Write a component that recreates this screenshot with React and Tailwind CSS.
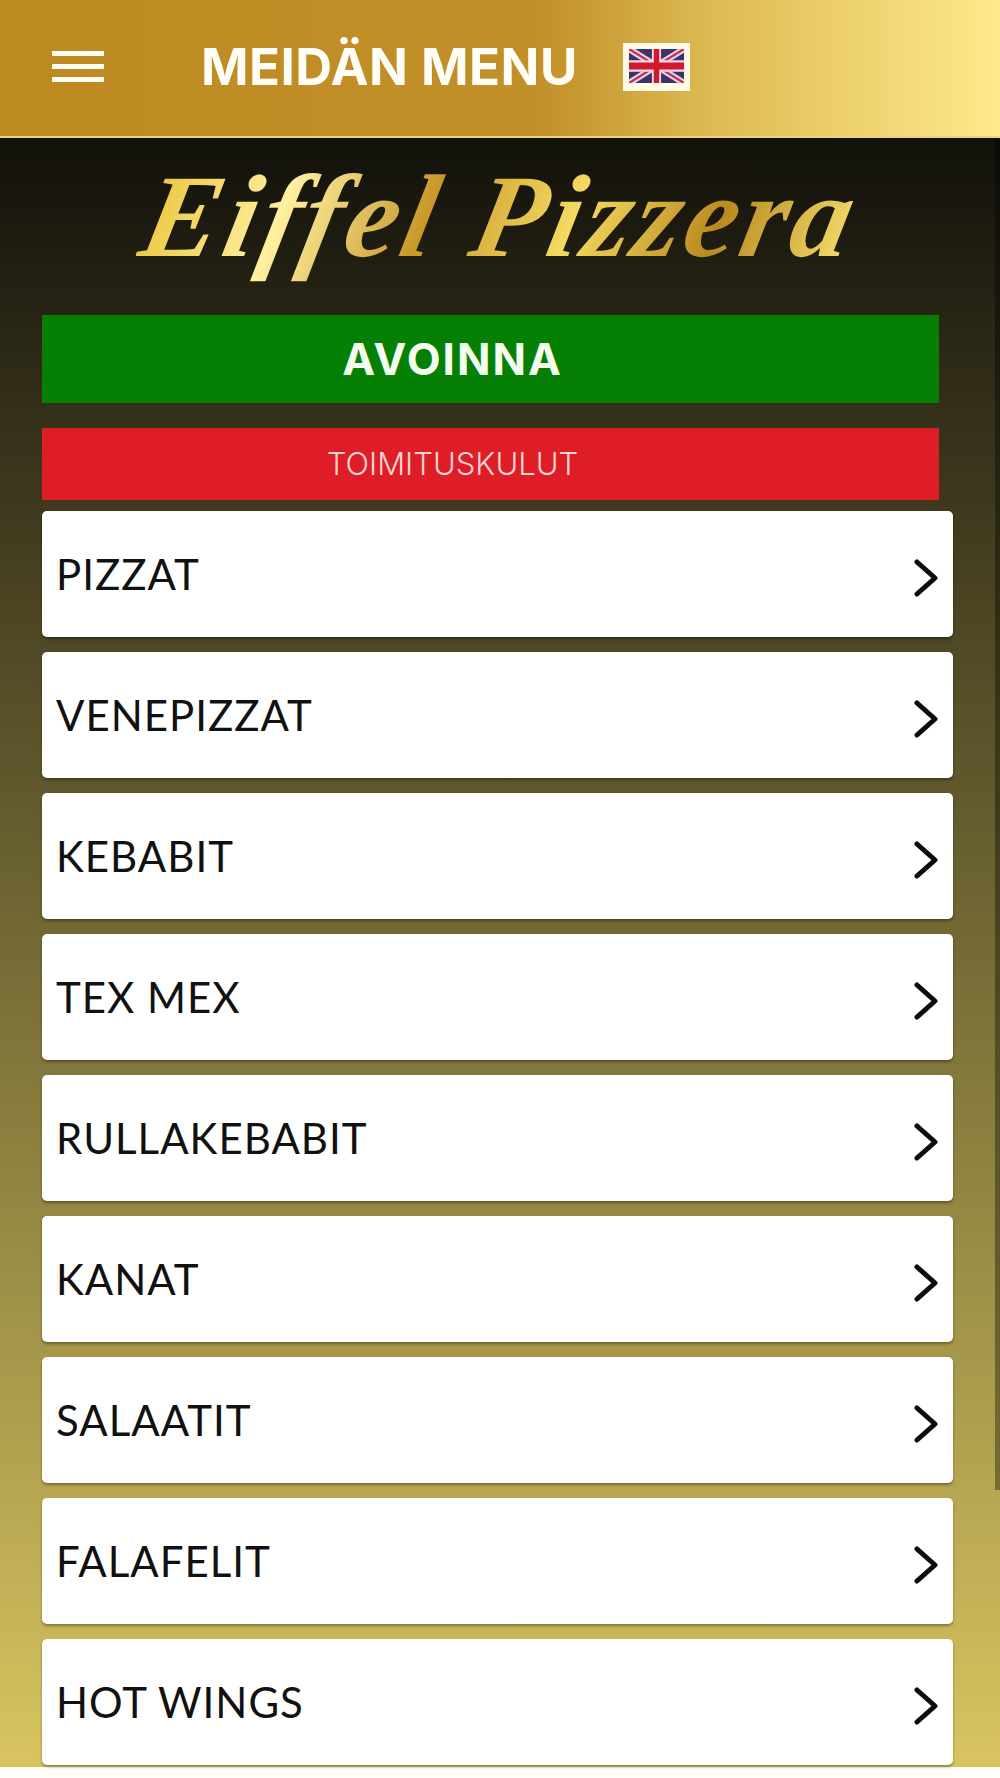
const items = ["PIZZAT","VENEPIZZAT","KEBABIT","TEX MEX","RULLAKEBABIT","KANAT","SALAATIT","FALAFELIT","HOT WINGS"];

function Flag() {
  return (
    <div className="ml-[45px] mt-[2px] h-[48px] w-[67px] shrink-0 bg-[#fffbe8] p-[6px] pb-[8px]">
      <svg viewBox="0 0 60 30" preserveAspectRatio="none" className="block h-full w-full blur-[0.6px]">
        <rect width="60" height="30" fill="#3b3566" />
        <path d="M0 0L60 30M60 0L0 30" stroke="#e8d0ea" strokeWidth="6" />
        <path d="M0 0L60 30M60 0L0 30" stroke="#c8284a" strokeWidth="2" />
        <path d="M30 0V30M0 15H60" stroke="#f4dcea" strokeWidth="10" />
        <path d="M30 0V30M0 15H60" stroke="#d2182f" strokeWidth="6" />
      </svg>
    </div>
  );
}

export default function App() {
  return (
    <div className="relative h-[1778px] w-[1000px] overflow-hidden bg-[#fffef8] font-['Inter',sans-serif]">
      <header className="flex h-[138px] items-center border-b-[2px] border-[#ecd673] bg-[linear-gradient(90deg,#bd8a20_0%,#c2902a_54%,#dcb850_70%,#ffe98c_100%)] pb-[4px]">
        <div className="ml-[52px] flex w-[52px] shrink-0 flex-col gap-[8px]">
          <span className="h-[5px] bg-[#fffdf2]" />
          <span className="h-[5px] bg-[#fffdf2]" />
          <span className="h-[5px] bg-[#fffdf2]" />
        </div>
        <h1 className="ml-[97px] whitespace-nowrap text-[51px] leading-none font-bold tracking-[0.5px] text-[#fffef6]">MEIDÄN MENU</h1>
        <Flag />
      </header>
      <main className="h-[1629px] bg-[linear-gradient(180deg,#12110b_0%,#d8c560_100%)] px-[42px] pt-[12px]">
        <div className="flex h-[165px] items-start justify-center">
          <span className="-skew-x-12 whitespace-nowrap bg-[linear-gradient(100deg,#e8c53a_0%,#fff0a0_20%,#c9982a_40%,#f4da60_60%,#b98a20_80%,#f6e070_100%)] bg-clip-text font-['Liberation_Serif',serif] text-[118px] leading-[134px] font-bold tracking-[4px] text-transparent italic">Eiffel Pizzera</span>
        </div>
        <div className="mr-[19px] flex h-[88px] items-center justify-center bg-[#067f05] pr-[76px] text-[44px] font-bold tracking-[2px] text-[#f4fff0]">AVOINNA</div>
        <div className="mr-[19px] mt-[25px] flex h-[72px] items-center justify-center bg-[#df1d26] pr-[76px] text-[31px] font-light text-[#f6d4d4]">TOIMITUSKULUT</div>
        <ul className="mt-[11px] flex w-[911px] flex-col gap-[15px]">
          {items.map((t) => (
            <li key={t} className="flex h-[126px] items-center justify-between rounded-[5px] bg-white pl-[14px] pr-[15px] shadow-[0_2px_3px_rgba(0,0,0,0.35)]">
              <span className="font-['Lato',sans-serif] text-[42px] tracking-[1px] text-[#111111]">{t}</span>
              <svg viewBox="0 0 24 38" className="mt-[8px] h-[38px] w-[24px]" fill="none" stroke="#0c0c0c" strokeWidth="5" strokeLinecap="round" strokeLinejoin="round">
                <path d="M3 3L21 19L3 35" />
              </svg>
            </li>
          ))}
        </ul>
      </main>
      <div className="absolute right-0 top-[138px] h-[1352px] w-[5px] bg-black/35" />
    </div>
  );
}
